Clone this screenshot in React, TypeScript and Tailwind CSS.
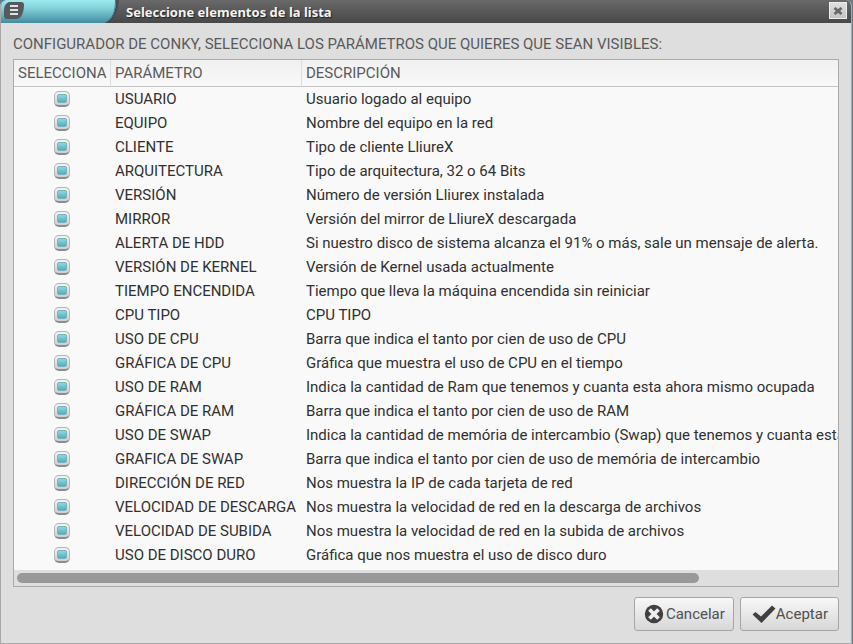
import { useState } from 'react';

const items = [
  { name: 'USUARIO', description: 'Usuario logado al equipo' },
  { name: 'EQUIPO', description: 'Nombre del equipo en la red' },
  { name: 'CLIENTE', description: 'Tipo de cliente LliureX' },
  { name: 'ARQUITECTURA', description: 'Tipo de arquitectura, 32 o 64 Bits' },
  { name: 'VERSIÓN', description: 'Número de versión Lliurex instalada' },
  { name: 'MIRROR', description: 'Versión del mirror de LliureX descargada' },
  { name: 'ALERTA DE HDD', description: 'Si nuestro disco de sistema alcanza el 91% o más, sale un mensaje de alerta.' },
  { name: 'VERSIÓN DE KERNEL', description: 'Versión de Kernel usada actualmente' },
  { name: 'TIEMPO ENCENDIDA', description: 'Tiempo que lleva la máquina encendida sin reiniciar' },
  { name: 'CPU TIPO', description: 'CPU TIPO' },
  { name: 'USO DE CPU', description: 'Barra que indica el tanto por cien de uso de CPU' },
  { name: 'GRÁFICA DE CPU', description: 'Gráfica que muestra el uso de CPU en el tiempo' },
  { name: 'USO DE RAM', description: 'Indica la cantidad de Ram que tenemos y cuanta esta ahora mismo ocupada' },
  { name: 'GRÁFICA DE RAM', description: 'Barra que indica el tanto por cien de uso de RAM' },
  { name: 'USO DE SWAP', description: 'Indica la cantidad de memória de intercambio (Swap) que tenemos y cuanta esta ahora mismo ocupada' },
  { name: 'GRAFICA DE SWAP', description: 'Barra que indica el tanto por cien de uso de memória de intercambio' },
  { name: 'DIRECCIÓN DE RED', description: 'Nos muestra la IP de cada tarjeta de red' },
  { name: 'VELOCIDAD DE DESCARGA', description: 'Nos muestra la velocidad de red en la descarga de archivos' },
  { name: 'VELOCIDAD DE SUBIDA', description: 'Nos muestra la velocidad de red en la subida de archivos' },
  { name: 'USO DE DISCO DURO', description: 'Gráfica que nos muestra el uso de disco duro' },
];

function TitleBar() {
  return (
    <header className="relative flex h-[23px] items-start justify-between bg-linear-to-b from-[#696969] to-[#484848] pt-[2px] pr-1">
      <svg className="absolute top-0 left-0" width="120" height="23" viewBox="0 0 120 23" aria-hidden="true">
        <defs>
          <linearGradient id="tab" x1="0" y1="0" x2="0" y2="1">
            <stop offset="0" stopColor="#9deaf0" />
            <stop offset="0.35" stopColor="#83d3da" />
            <stop offset="1" stopColor="#428ca0" />
          </linearGradient>
        </defs>
        <path d="M0 0H118C117 11 113 20 106 23H0Z" fill="#3c3c3c" opacity="0.6" />
        <path d="M0 0H115C115 11 112 20 104 23H0Z" fill="url(#tab)" />
        <path d="M114.500 0C114.500 11 112 19 104 22.500" fill="none" stroke="#357f8e" />
        <path d="M0 0H4L0 3Z" fill="#466171" />
      </svg>
      <button type="button" aria-label="Menú" className="relative ml-[3px] h-[18px] w-5">
        <svg width="20" height="18" viewBox="0 0 20 18" aria-hidden="true">
          <path d="M5 0H17Q20 0 20 3Q20 10 17 14.500Q15 17 12 17H3Q0 17 0 14V8Q0 2 5 0Z" fill="#555b5d" />
          <path d="M6 4H14M6 8H14M6 12H14" stroke="#e2e2e2" strokeWidth="2" />
        </svg>
      </button>
      <h1 className="relative ml-[102px] flex-1 font-['Noto_Sans','Open_Sans',sans-serif] text-[13px] leading-5 font-bold text-[#f4f4f4] [text-shadow:1px_1px_1px_#222]">
        Seleccione elementos de la lista
      </h1>
      <button
        type="button"
        aria-label="Cerrar"
        className="flex h-[17px] w-[18px] items-center justify-center border border-[#ededed] bg-linear-to-b from-[#dedede] to-[#c4c4c4]"
      >
        <svg width="10" height="8" viewBox="0 0 10 8" aria-hidden="true">
          <path d="M1.500 1L8.500 7M8.500 1L1.500 7" stroke="#686868" strokeWidth="2.800" />
        </svg>
      </button>
    </header>
  );
}

export default function App() {
  const [checked, setChecked] = useState(items.map(() => true));

  const toggle = (idx: number) => {
    setChecked(checked.map((value, i) => (i === idx ? !value : value)));
  };

  return (
    <div className="min-h-screen bg-[#64798a] pr-px font-[Roboto,sans-serif] text-[15px] leading-6 text-[#303030]">
      <div className="flex min-h-screen flex-col overflow-hidden rounded-t-md border-r border-b border-l border-[#a9a9a9] bg-[#dedede]">
        <TitleBar />
        <main className="flex flex-1 flex-col px-3 pt-2 pb-3">
          <p className="h-7 pt-px text-[#5a5a5a]">
            CONFIGURADOR DE CONKY, SELECCIONA LOS PARÁMETROS QUE QUIERES QUE SEAN VISIBLES:
          </p>

          <div className="flex flex-1 flex-col border border-[#aaa] bg-[#f9f9f9]">
            <div className="flex-1 overflow-x-auto [scrollbar-width:none]">
              <table className="w-full table-fixed border-separate border-spacing-0 text-left whitespace-nowrap">
                <colgroup>
                  <col className="w-[97px]" />
                  <col className="w-[191px]" />
                  <col />
                </colgroup>
                <thead>
                  <tr className="h-[27px] bg-linear-to-b from-[#f0f0f0] to-[#f9f9f9] text-[#5a5a5a]">
                    <th className="border-r border-b border-r-[#ddd] border-b-[#c4c4c4] px-1 font-normal">SELECCIONA</th>
                    <th className="border-r border-b border-r-[#ddd] border-b-[#c4c4c4] px-1 font-normal">PARÁMETRO</th>
                    <th className="border-b border-b-[#c4c4c4] px-1 font-normal">DESCRIPCIÓN</th>
                  </tr>
                </thead>
                <tbody>
                  {items.map((item, idx) => (
                    <tr key={item.name} className="h-6">
                      <td className="pr-px">
                        <label className="flex h-6 items-center justify-center">
                          <input
                            type="checkbox"
                            aria-label={item.name}
                            checked={checked[idx]}
                            onChange={() => toggle(idx)}
                            className="peer sr-only"
                          />
                          <span className="flex size-4 items-center justify-center rounded-[5px] border border-[#b4b4b4] border-b-2 border-b-[#8c8c8c] bg-linear-to-b from-[#f4f4f4] to-[#cfcfcf] peer-focus-visible:border-[#428ca0] peer-checked:*:block">
                            <span className="hidden h-[9px] w-[10px] rounded-[2px] border border-[#6fb4be] bg-linear-to-b from-[#89dce2] to-[#5aabb9]"></span>
                          </span>
                        </label>
                      </td>
                      <td className="px-1">{item.name}</td>
                      <td className="px-1">{item.description}</td>
                    </tr>
                  ))}
                </tbody>
              </table>
            </div>
            <div className="h-4 bg-[#dedede] p-[3px]">
              <div className="h-[10px] w-5/6 rounded-full bg-[#999]"></div>
            </div>
          </div>

          <div className="mt-[10px] flex justify-end gap-[6px] text-[#505050]">
            <button
              type="button"
              className="flex h-[34px] items-center justify-center gap-[2px] rounded-[3px] border border-[#a5a5a5] bg-linear-to-b from-[#f8f8f8] to-[#d7d7d7] px-2"
            >
              <svg className="ml-px" width="20" height="20" viewBox="0 0 20 20" aria-hidden="true">
                <circle cx="10" cy="10" r="9.200" fill="#404040" />
                <path d="M5.500 5.500L14.500 14.500M14.500 5.500L5.500 14.500" stroke="#eee" strokeWidth="3.800" />
              </svg>
              Cancelar
            </button>
            <button
              type="button"
              className="flex h-[34px] items-center justify-center rounded-[3px] border border-[#a5a5a5] bg-linear-to-b from-[#f8f8f8] to-[#d7d7d7] pr-[10px] pl-[11px]"
            >
              <svg width="24" height="20" viewBox="0 0 24 20" aria-hidden="true">
                <path d="M0.500 10.500L3.500 8L9 12.500L20 1.500L23.500 4.500L9.500 19Z" fill="#404040" />
              </svg>
              Aceptar
            </button>
          </div>
        </main>
      </div>
    </div>
  );
}
